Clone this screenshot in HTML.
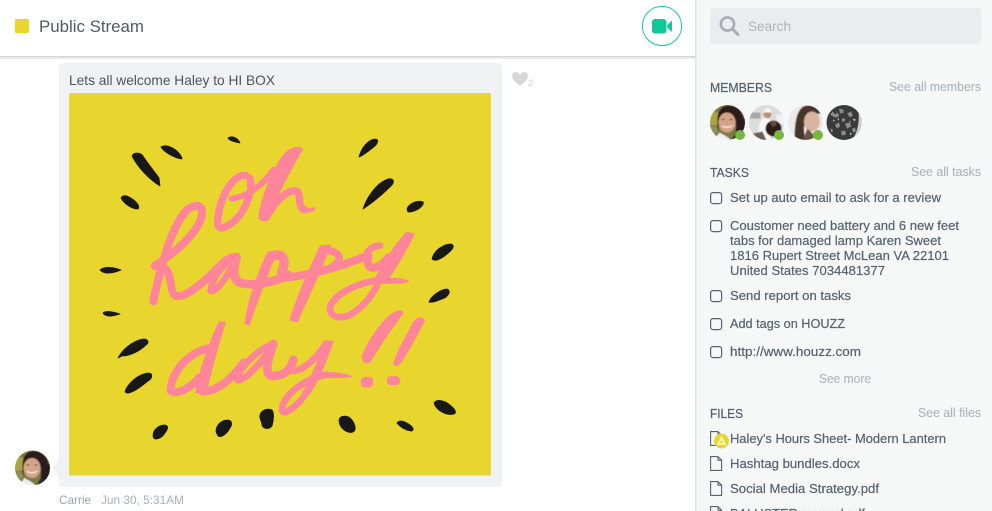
<!DOCTYPE html>
<html><head><meta charset="utf-8"><title>Public Stream</title>
<style>
html,body{margin:0;padding:0;background:#fff;width:992px;height:511px;overflow:hidden}
svg{display:block;position:absolute;left:0;top:0}
text{font-family:"Liberation Sans",Arial,sans-serif;white-space:pre}
.t{font-size:13px;fill:#56626e;stroke:#56626e;stroke-width:.2px}
.l{font-size:12.5px;fill:#adb4bb;stroke:#adb4bb;stroke-width:.12px}
.h{font-size:13px;fill:#525e6a;stroke:#525e6a;stroke-width:.2px}
.cb{fill:none;stroke:#56626e;stroke-width:1.2}
.fi{fill:none;stroke:#56626e;stroke-width:1.1;stroke-linejoin:round}
.k{fill:#181818;stroke:#181818;stroke-width:.8;stroke-linejoin:round}
.p{fill:none;stroke:#fd8499;stroke-linecap:round;stroke-linejoin:round}
.f{fill:#fd8499;stroke:#fd8499;stroke-width:3;stroke-linejoin:round}
</style></head><body>
<svg width="992" height="511" viewBox="0 0 992 511" xmlns="http://www.w3.org/2000/svg">
<defs>
<clipPath id="c1"><circle cx="0" cy="0" r="17.5"/></clipPath>
<filter id="b"><feGaussianBlur stdDeviation=".6"/></filter>
<g id="carrie" clip-path="url(#c1)"><g filter="url(#b)">
<rect x="-18" y="-18" width="36" height="36" fill="#7d7a45"/>
<circle cx="-14" cy="-4" r="7" fill="#a8a645"/>
<circle cx="-14" cy="8" r="4" fill="#8e9060"/>
<path d="M-9,8 C-12,-6 -9,-17 1,-17 C12,-17 18,-7 16,4 L15,12 L8,10 C10,-4 6,-8 -1,-9 C-6,-8 -8,-3 -9,8Z" fill="#2c1f1a"/>
<rect x="9" y="-4" width="9" height="22" fill="#2c1f1a"/>
<ellipse cx="-0.5" cy="0" rx="8.5" ry="10" fill="#d4a487"/>
<path d="M-6,3 Q-1,7 5,3 Q-1,6 -6,3Z" fill="#fff" stroke="#fff" stroke-width=".6"/>
<path d="M-6,-3 h3 M2,-3 h3" stroke="#3a2a20" stroke-width="1"/>
<path d="M-14,18 L-8,10 L-1,14 L4,18Z" fill="#efefef"/>
<path d="M4,18 L8,10 L14,12 L13,18Z" fill="#2a2a2a"/>
</g></g>
</defs>

<!-- sidebar -->
<rect x="695" y="0" width="297" height="511" fill="#f6f8f8"/>
<rect x="695" y="0" width="1.4" height="511" fill="#dfe2e5"/>

<!-- header -->
<rect x="0" y="56" width="695" height="3" fill="#ececec"/>
<rect x="0" y="0" width="695" height="56.5" fill="#fff"/>
<rect x="0" y="56" width="695" height="1.2" fill="#d4d4d4"/>
<rect x="15" y="19" width="14" height="14" rx="1.5" fill="#e8d52e"/>
<text x="39" y="32" font-size="16.5" fill="#4e5b67" textLength="105" lengthAdjust="spacingAndGlyphs">Public Stream</text>
<circle cx="662" cy="26" r="19.6" fill="#fff" stroke="#1cc9a4" stroke-width="1"/>
<rect x="652" y="19" width="14.5" height="14.5" rx="3" fill="#13c79c"/>
<path d="M667.2,25 L672,20.5 V32 L667.2,27.5Z" fill="#13c79c"/>

<!-- message -->
<rect x="59" y="63" width="443" height="424" rx="3" fill="#eff1f3"/>
<path d="M59,459 L53,468 L59,477Z" fill="#eff1f3"/>
<text x="69" y="85" font-size="14" fill="#4a5560" textLength="206" lengthAdjust="spacingAndGlyphs">Lets all welcome Haley to HI BOX</text>
<rect x="69" y="93" width="422" height="382" rx="2" fill="#e8d52e"/>
<rect x="69" y="475" width="422" height="1" fill="#dfdfd8"/>

<!-- black marks -->
<path class="k" d="M132,156 C134,152 140,152 143,156 C148,164 155,172 159,178 L160,186 C150,180 138,168 132,156Z"/>
<path class="k" d="M161,147 C165,144 172,147 177,151 C180,154 182,157 182,159 C174,158 164,152 161,147Z"/>
<path class="k" d="M228,138 C232,135 238,138 240,143 C235,142 230,141 228,138Z"/>
<path class="k" d="M121,198 C124,193 130,197 135,201 C138,204 140,207 138,209 C132,209 124,204 121,198Z"/>
<path class="k" d="M100,270 C104,266 114,267 121,270 C114,273 104,275 100,270Z"/>
<path class="k" d="M103,313 C106,310 114,312 120,314 C114,316 106,318 103,313Z"/>
<path class="k" d="M359,157 C361,149 367,140 375,139 C379,139 378,143 375,146 C370,150 364,155 359,157Z"/>
<path class="k" d="M363,209 C366,199 376,183 388,179 C394,178 395,182 391,186 C382,195 372,203 363,209Z"/>
<path class="k" d="M407,209 C409,203 418,200 423,202 C425,205 417,212 408,212Z"/>
<path class="k" d="M432,259 C434,250 444,244 451,244 C456,246 452,250 446,255 C441,259 435,262 432,259Z"/>
<path class="k" d="M429,302 C431,296 441,289 447,289 C452,291 448,297 442,299 C437,301 432,303 429,302Z"/>
<path class="k" d="M118,358 C122,350 132,341 143,339 C149,339 149,343 146,345 C140,351 130,356 122,356Z"/>
<path class="k" d="M125,392 C127,384 138,374 148,373 C154,373 152,379 148,381 C142,386 132,394 127,393Z"/>
<path class="k" d="M153,436 C153,429 159,425 165,425 C169,426 168,429 165,433 C162,438 154,442 153,436Z"/>
<path class="k" d="M216,432 C216,424 222,420 228,420 C233,421 232,425 230,428 C227,434 221,438 218,436Z"/>
<path class="k" d="M260,415 C261,410 268,408 272,410 C275,414 273,422 272,426 C269,430 263,429 262,425 C262,421 259,419 260,415Z"/>
<path class="k" d="M339,420 C340,415 348,415 351,419 C355,423 357,430 353,432 C347,434 339,428 339,420Z"/>
<path class="k" d="M397,423 C400,419 406,422 410,425 C414,428 414,431 411,431 C405,430 400,427 397,423Z"/>
<path class="k" d="M434,403 C437,398 446,401 451,406 C455,409 457,413 454,414 C446,416 436,410 434,403Z"/>

<!-- lettering -->
<g transform="translate(140 140) scale(.33333)">
<!-- oh -->
<path class="p" stroke-width="22" d="M318,107 C280,100 238,170 233,245 C232,272 252,268 282,244 C318,212 340,150 330,115"/>
<path class="p" stroke-width="18" d="M275,176 C320,170 365,140 400,90"/>
<path class="f" d="M488,27 C470,14 440,27 420,60 C395,100 364,170 356,233 C365,246 383,245 390,233 C400,190 440,110 488,27Z"/>
<path class="p" stroke-width="22" d="M385,222 C410,180 440,152 465,152 C488,152 468,203 495,210"/>
<path class="p" stroke-width="11" d="M495,211 C505,213 515,210 520,207"/>
<!-- h -->
<path class="p" stroke-width="24" d="M40,484 C60,390 90,270 135,217 C150,197 185,187 186,215 C188,260 125,325 44,378"/>
<path class="p" stroke-width="24" d="M72,385 C98,395 88,462 108,468 C140,474 190,428 250,368 C265,355 280,350 290,350"/>
<!-- a -->
<path class="p" stroke-width="20" d="M290,352 C250,370 216,410 212,452 C230,460 268,400 290,354"/>
<path class="p" stroke-width="26" d="M290,354 C278,390 280,424 305,430 C340,438 400,428 445,405"/>
<!-- p p -->
<path class="f" d="M383,337 L412,332 C385,400 347,490 328,556 L315,550 C325,480 353,400 383,337Z"/>
<path class="p" stroke-width="28" d="M402,348 C430,338 440,360 425,398"/>
<path class="f" d="M541,318 L572,315 C540,400 500,480 472,546 L450,540 C470,470 508,390 541,318Z"/>
<path class="p" stroke-width="22" d="M560,330 C608,340 612,360 566,388"/>
<path class="p" stroke-width="24" d="M430,414 C500,406 590,385 680,348"/>
<!-- y -->
<path class="p" stroke-width="20" d="M676,350 C684,328 700,318 720,317"/>
<path class="p" stroke-width="24" d="M686,350 C672,394 715,394 745,352"/>
<path class="f" d="M800,277 L823,282 C800,330 765,390 735,430 L700,425 C730,370 760,320 800,277Z"/>
<path class="p" stroke-width="20" d="M712,435 C695,470 665,505 630,525 C595,540 570,528 570,505 C575,470 640,430 720,420"/>
<path class="f" d="M700,417 C740,414 785,414 804,423 C803,429 780,430 700,430Z"/>
<!-- d -->
<path class="f" d="M237,546 L256,546 C235,620 209,700 199,760 L167,758 C182,680 207,610 237,546Z"/>
<path class="p" stroke-width="24" d="M205,625 C150,635 92,695 92,752 C105,766 150,748 178,712"/>
<path class="p" stroke-width="24" d="M190,755 C240,752 280,710 310,668"/>
<!-- a -->
<path class="p" stroke-width="20" d="M400,612 C360,625 296,680 292,720 C312,728 370,660 400,616"/>
<path class="p" stroke-width="26" d="M400,612 C385,650 370,708 398,708 C430,708 452,692 460,660"/>
<!-- y -->
<path class="p" stroke-width="20" d="M445,688 C470,705 520,670 558,610"/>
<path class="f" d="M556,603 L580,603 C560,660 540,715 510,760 L482,770 C510,720 536,660 556,603Z"/>
<path class="p" stroke-width="20" d="M495,765 C470,800 430,830 426,810 C426,770 490,716 560,704"/>
<path class="f" d="M540,697 C580,697 612,699 635,710 C610,715 570,712 535,712Z"/>
<!-- !! -->
<path class="f" d="M775,513 C740,521 691,590 666,650 C666,669 685,674 694,660 C715,620 760,560 787,521 C789,513 780,511 775,513Z"/>
<path class="f" d="M849,536 C835,527 821,541 811,566 C791,600 766,650 761,671 C766,680 775,679 784,665 C810,625 840,570 854,541Z"/>
<rect x="664" y="712" width="34" height="29" rx="11" class="f"/>
<rect x="742" y="710" width="37" height="24" rx="11" class="f"/>
</g>

<!-- heart -->
<path d="M520,86 C516,82 512,80 512,76 C512,71 518,71 520,75 C522,71 528,71 528,76 C528,80 524,82 520,86Z" fill="#d6d6d6"/>
<text x="528" y="86" font-size="9" fill="#d2d2d2">2</text>

<!-- author -->
<use href="#carrie" x="32.5" y="468"/>
<text x="59" y="504" font-size="12" fill="#98a1aa" textLength="32" lengthAdjust="spacingAndGlyphs">Carrie</text>
<text x="101" y="504" font-size="12" fill="#a9b0b8" textLength="83" lengthAdjust="spacingAndGlyphs">Jun 30, 5:31AM</text>

<!-- search -->
<rect x="710" y="8" width="271" height="36" rx="3" fill="#eaecee"/>
<circle cx="727.5" cy="24" r="6.6" fill="none" stroke="#a5adb5" stroke-width="2.6"/>
<path d="M732.5,29 L738,34.5" stroke="#a5adb5" stroke-width="3" stroke-linecap="round"/>
<text x="748" y="31" font-size="14" fill="#adb3ba" textLength="43" lengthAdjust="spacingAndGlyphs">Search</text>

<!-- members -->
<text class="h" x="710" y="92" textLength="62" lengthAdjust="spacingAndGlyphs">MEMBERS</text>
<text class="l" x="889" y="91" textLength="92" lengthAdjust="spacingAndGlyphs">See all members</text>
<use href="#carrie" x="727.5" y="122.5"/>
<g transform="translate(766.5 122.5)"><g clip-path="url(#c1)"><g filter="url(#b)">
<rect x="-18" y="-18" width="36" height="36" fill="#dcdcdc"/>
<rect x="-18" y="-10" width="12" height="6" fill="#a9a9a9"/>
<rect x="10" y="-8" width="8" height="10" fill="#f0f0f0"/>
<path d="M-10,18 L-7,2 C-6,-3 -3,-5 -1,-5 L4,-3 L4,18Z" fill="#f6f6f6"/>
<ellipse cx="1" cy="-9" rx="4" ry="5" fill="#b8906f"/>
<path d="M-4,-10 Q1,-19 6,-10Z" fill="#f5f5f5"/>
<ellipse cx="7" cy="6" rx="8" ry="8" fill="#2a1b17"/>
<circle cx="7" cy="1" r="3" fill="#6a4a3a"/>
<path d="M-18,12 L-4,9 L0,18 L-18,18Z" fill="#6a5f56"/>
</g></g></g>
<g transform="translate(805.5 122.5)"><g clip-path="url(#c1)"><g filter="url(#b)">
<rect x="-18" y="-18" width="36" height="36" fill="#eceae8"/>
<path d="M-11,18 C-11,-6 -7,-18 4,-17 C10,-17 14,-14 16,-9 L2,-8 C-3,4 -2,12 1,18Z" fill="#46342a"/>
<ellipse cx="6.5" cy="-1" rx="8" ry="10" fill="#d8b5a0"/>
<path d="M-3,18 L2,6 L8,12 L9,18Z" fill="#6b5242"/>
</g></g></g>
<g transform="translate(844 122.5)"><g clip-path="url(#c1)">
<rect x="-18" y="-18" width="36" height="36" fill="#3a3a3a"/>
<path d="M-14,-8 l3,-3 l2,3 l3,-2 l1,4 l-4,1Z M-5,-14 l4,1 l1,3 l-4,1Z M3,-9 l4,-2 l2,4 l-3,2Z M-9,2 l4,-2 l1,4 l-3,2Z M1,1 l5,-1 l1,4 l-4,2Z M-3,9 l4,-1 l1,4 l-4,1Z M8,6 l3,-1 l1,4 l-3,1Z M-14,6 l3,1 l-1,4Z M5,-2 l2,1 l-1,2Z M-2,-4 l3,0 l0,3 l-3,0Z" fill="#8d8d8d"/>
<path d="M-7,-4 l2,0 l0,2Z M-11,-3 l2,1 l-2,1Z M9,-4 l3,1 l-2,2Z M6,10 l2,1 l-2,2Z" fill="#c4c4c4"/>
<path d="M13,-18 H18 V18 H7 C14,12 17,-6 13,-18Z" fill="#d0d0d0"/>
</g></g>
<circle cx="740" cy="135" r="5" fill="#76b83f"/>
<circle cx="779" cy="135" r="5" fill="#76b83f"/>
<circle cx="818" cy="135" r="5" fill="#76b83f"/>

<!-- tasks -->
<text class="h" x="710" y="177" textLength="39" lengthAdjust="spacingAndGlyphs">TASKS</text>
<text class="l" x="911" y="176" textLength="70" lengthAdjust="spacingAndGlyphs">See all tasks</text>
<rect class="cb" x="710.6" y="192.6" width="11" height="11" rx="2.5"/>
<text class="t" x="730" y="202" textLength="211" lengthAdjust="spacingAndGlyphs">Set up auto email to ask for a review</text>
<rect class="cb" x="710.6" y="220.6" width="11" height="11" rx="2.5"/>
<text class="t" x="730" y="230" textLength="229" lengthAdjust="spacingAndGlyphs">Coustomer need battery and 6 new feet</text>
<text class="t" x="730" y="245" textLength="211" lengthAdjust="spacingAndGlyphs">tabs for damaged lamp Karen Sweet</text>
<text class="t" x="730" y="260" textLength="219" lengthAdjust="spacingAndGlyphs">1816 Rupert Street McLean VA 22101</text>
<text class="t" x="730" y="275" textLength="155" lengthAdjust="spacingAndGlyphs">United States 7034481377</text>
<rect class="cb" x="710.6" y="290.6" width="11" height="11" rx="2.5"/>
<text class="t" x="730" y="300" textLength="121" lengthAdjust="spacingAndGlyphs">Send report on tasks</text>
<rect class="cb" x="710.6" y="318.6" width="11" height="11" rx="2.5"/>
<text class="t" x="730" y="328" textLength="115" lengthAdjust="spacingAndGlyphs">Add tags on HOUZZ</text>
<rect class="cb" x="710.6" y="346.6" width="11" height="11" rx="2.5"/>
<text class="t" x="730" y="356" textLength="131" lengthAdjust="spacingAndGlyphs">http://www.houzz.com</text>
<text class="l" x="819" y="383" textLength="52" lengthAdjust="spacingAndGlyphs">See more</text>

<!-- files -->
<text class="h" x="710" y="418" textLength="33" lengthAdjust="spacingAndGlyphs">FILES</text>
<text class="l" x="918" y="417" textLength="63" lengthAdjust="spacingAndGlyphs">See all files</text>
<path class="fi" d="M710.6,431.6 H718 L721.6,435.2 V445.4 H710.6Z M718,431.6 V435.2 H721.6"/>
<circle cx="721.5" cy="441" r="7.5" fill="#e8d52e"/>
<path d="M721.5,436 L726.3,444.8 H716.7Z M721.5,440 L719.7,443.2 H723.3Z" fill="#fbf6c8" fill-rule="evenodd"/>
<text class="t" x="730" y="443" textLength="216" lengthAdjust="spacingAndGlyphs">Haley's Hours Sheet- Modern Lantern</text>
<path class="fi" d="M710.6,456.6 H718 L721.6,460.2 V470.4 H710.6Z M718,456.6 V460.2 H721.6"/>
<text class="t" x="730" y="468" textLength="130" lengthAdjust="spacingAndGlyphs">Hashtag bundles.docx</text>
<path class="fi" d="M710.6,481.6 H718 L721.6,485.2 V495.4 H710.6Z M718,481.6 V485.2 H721.6"/>
<text class="t" x="730" y="493" textLength="149" lengthAdjust="spacingAndGlyphs">Social Media Strategy.pdf</text>
<path class="fi" d="M710.6,506.6 H718 L721.6,510.2 V520.4 H710.6Z M718,506.6 V510.2 H721.6"/>
<text class="t" x="730" y="518" textLength="135" lengthAdjust="spacingAndGlyphs">BALUSTER manual.pdf</text>
</svg>
</body></html>
